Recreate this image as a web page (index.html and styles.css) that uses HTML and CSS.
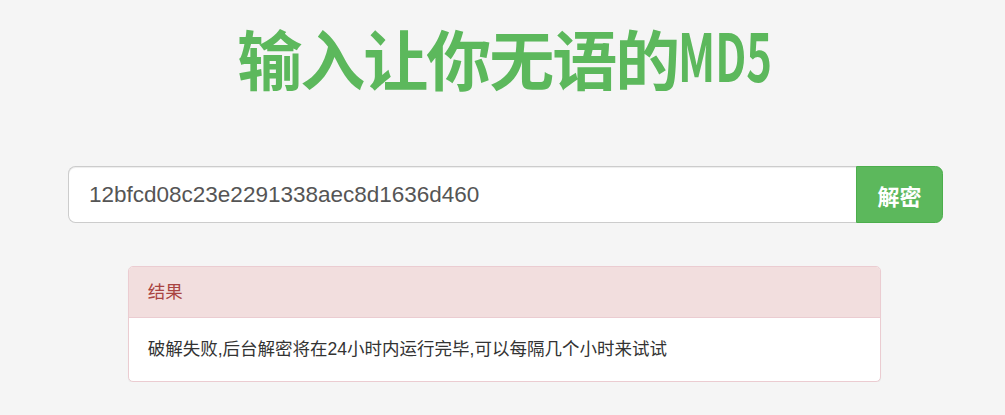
FILE: index.html
```html
<!DOCTYPE html>
<html lang="zh-CN">
<head>
  <meta charset="UTF-8" />
  <meta name="viewport" content="width=device-width, initial-scale=1.0"/>
  <title>输入让你无语的MD5</title>
  <link rel="stylesheet" href="styles.css">
</head>

<body>
  <div class="wrap">
    <!-- Page title -->
    <h1 class="title">输入让你无语的<span class="title-latin">MD5</span></h1>

    <!-- Search form -->
    <form class="input-group" onsubmit="return false;">
      <input class="form-control" type="text" value="12bfcd08c23e2291338aec8d1636d460">
      <button class="btn-green" type="submit">解密</button>
    </form>

    <!-- Result panel -->
    <div class="panel">
      <div class="panel-heading">结果</div>
      <div class="panel-body">破解失败,后台解密将在24小时内运行完毕,可以每隔几个小时来试试</div>
    </div>
  </div>
</body>
</html>
```

FILE: styles.css
```css
* {
  margin: 0;
  padding: 0;
  box-sizing: border-box;
}
body {
  font-family: "Liberation Sans", "Noto Sans CJK SC", sans-serif;
  font-size: 17.5px;
  line-height: 25px;
  color: #333;
  background: #f5f5f5;
}
.wrap {
  width: 875px;
  margin-left: 68px;
}

/* Title */
.title {
  font-family: "Noto Sans CJK SC", sans-serif;
  font-size: 65px;
  line-height: 69px;
  height: 69px;
  font-weight: 700;
  color: #5cb85c;
  text-align: center;
  margin-top: 23px;
  letter-spacing: -2px;
  white-space: nowrap;
}
/* the latin part of the title is set narrow, like the CJK font's half-width glyphs */
.title-latin {
  display: inline-block;
  font-size: 66px;
  line-height: 60px;
  letter-spacing: 0;
  vertical-align: 3px;
  transform: scaleX(0.66);
  transform-origin: 0 50%;
  margin-right: -47px;
}

/* Input group */
.input-group {
  display: flex;
  margin-top: 74px;
  height: 57px;
}
.form-control {
  flex: 1;
  height: 57px;
  padding: 12px 20px;
  font-family: "Liberation Sans", sans-serif;
  font-size: 22.5px;
  color: #555;
  background: #fff;
  border: 1px solid #ccc;
  border-right: 0;
  border-radius: 7.5px 0 0 7.5px;
  box-shadow: inset 0 1px 1px rgba(0, 0, 0, .075);
  outline: none;
}
.btn-green {
  width: 87px;
  height: 57px;
  font-family: "Noto Sans CJK SC", sans-serif;
  font-size: 22px;
  font-weight: 700;
  color: #fff;
  background: #5cb85c;
  border: 1px solid #4cae4c;
  border-radius: 0 7.5px 7.5px 0;
  cursor: pointer;
}

/* Result panel */
.panel {
  margin: 43px 62px 0 60px;
  background: #fff;
  border: 1px solid #ebccd1;
  border-radius: 5px;
  box-shadow: 0 1px 1px rgba(0, 0, 0, .05);
}
.panel-heading {
  padding: 12.5px 18.75px;
  color: #a94442;
  background: #f2dede;
  border-bottom: 1px solid #ebccd1;
  border-radius: 4px 4px 0 0;
}
.panel-body {
  padding: 18.75px;
}
```
